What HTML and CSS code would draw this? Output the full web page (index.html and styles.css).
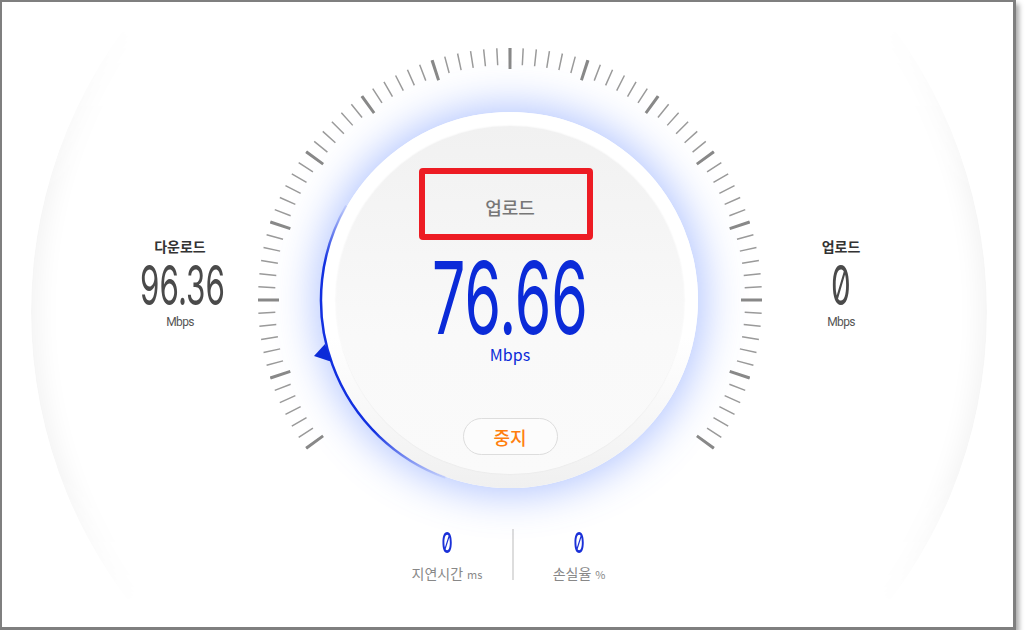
FILE: index.html
```html
<!DOCTYPE html>
<html lang="ko">
<head>
    <meta charset="UTF-8" />
    <title>인터넷 속도 측정</title>
    <link rel="stylesheet" href="styles.css">
</head>
<body>
    <div class="window">
        <div class="backdrop"></div>

        <div class="gauge-row">
            <!-- finished download result -->
            <div class="side side-left">
                <div class="side-label">다운로드</div>
                <div class="side-value">96.36</div>
                <div class="side-unit">Mbps</div>
            </div>

            <!-- dial -->
            <div class="dial">
                <div class="face">
                    <div class="face-inner">
                        <div class="phase">업로드</div>
                        <div class="speed">76.66</div>
                        <div class="speed-unit">Mbps</div>
                        <button class="stop">중지</button>
                        <div class="mark"></div>
                    </div>
                </div>
                <svg class="scale" width="520" height="480" viewBox="0 0 520 480">
                    <defs>
                        <linearGradient id="arc-fade" gradientUnits="userSpaceOnUse" x1="0" y1="160" x2="0" y2="442">
                            <stop offset="0" stop-color="#1230e0" stop-opacity="0" />
                            <stop offset="0.22" stop-color="#1230e0" />
                            <stop offset="0.82" stop-color="#1230e0" />
                            <stop offset="1" stop-color="#1230e0" stop-opacity="0" />
                        </linearGradient>
                    </defs>
                    <!-- 85 ticks, 3deg apart, from 216deg to -36deg -->
                    <path class="tick-minor" pathLength="254" d="M 65.53 406.54 A 243.5 243.5 0 1 1 454.47 406.54" />
                    <path class="tick-major" pathLength="254" d="M 67.13 405.34 A 241.5 241.5 0 1 1 452.87 405.34" />
                    <path class="arc" stroke="url(#arc-fade)" d="M 96.3 165.5 A 189 189 0 0 0 195.4 437.6" />
                    <polygon class="pointer" points="64,316 75,304 82,322" />
                </svg>
            </div>

            <!-- upload result (pending) -->
            <div class="side side-right">
                <div class="side-label">업로드</div>
                <div class="side-value">0</div>
                <div class="side-unit">Mbps</div>
            </div>
        </div>

        <div class="stats">
            <div class="stat">
                <div class="stat-value">0</div>
                <div class="stat-label">지연시간 <small>ms</small></div>
            </div>
            <div class="divider"></div>
            <div class="stat">
                <div class="stat-value">0</div>
                <div class="stat-label">손실율 <small>%</small></div>
            </div>
        </div>
    </div>
</body>
</html>
```

FILE: styles.css
```css
body {
    margin: 0;
    background: #fff;
    font-family: "Noto Sans CJK KR", "Noto Sans", sans-serif;
}

.window {
    position: relative;
    width: 1016px;
    height: 630px;
    box-sizing: border-box;
    border: solid #7f7f7f;
    border-width: 2px 3px 3px 2px;
    box-shadow: 3px 4px 5px rgba(0, 0, 0, 0.35);
    background: #fff;
    overflow: hidden;
}

/* big pale disc behind the gauge, only its sides show */
.backdrop {
    position: absolute;
    left: 29px;
    top: -168px;
    width: 956px;
    height: 956px;
    border-radius: 50%;
    box-shadow: inset 18px 0 26px -12px rgba(0, 0, 0, 0.055),
                inset -18px 0 26px -12px rgba(0, 0, 0, 0.055);
    -webkit-mask-image: linear-gradient(transparent 185px, #000 360px, #000 640px, transparent 775px);
    mask-image: linear-gradient(transparent 185px, #000 360px, #000 640px, transparent 775px);
}

.gauge-row {
    position: relative;
    display: grid;
    grid-template-columns: 248px 520px 1fr;
    height: 480px;
    margin-top: 38px;
}

.side {
    width: 140px;
    margin-top: 196px;
    align-self: start;
    text-align: center;
}

.side-left {
    justify-self: end;
}

.side-right {
    justify-self: start;
    margin-left: 1px;
}

.side-label {
    font-size: 14px;
    line-height: 20px;
    font-weight: 700;
    color: #333;
}

.side-value {
    margin-top: 1.5px;
    font-family: Inter, sans-serif;
    font-weight: 400;
    font-size: 55px;
    line-height: 55px;
    color: #4a4a4a;
    font-feature-settings: "zero" 1;
    transform: scaleX(0.57);
}

.side-unit {
    margin-top: 1px;
    font-family: Roboto, sans-serif;
    font-size: 12px;
    line-height: 16px;
    letter-spacing: -0.6px;
    color: #555;
}

.dial {
    position: relative;
    display: flex;
    justify-content: center;
    align-items: flex-start;
    padding-top: 72px;
    box-sizing: border-box;
}

.face {
    width: 376px;
    height: 376px;
    border-radius: 50%;
    background: linear-gradient(#fff 60%, #f0f0f0);
    box-shadow: 0 0 42px 6px rgba(70, 115, 255, 0.42);
    display: flex;
    align-items: center;
    justify-content: center;
}

.face-inner {
    position: relative;
    width: 348px;
    height: 348px;
    box-sizing: border-box;
    padding-top: 69px;
    border-radius: 50%;
    background: linear-gradient(#f1f1f1, #f9f9f9 60%, #fafafa);
    box-shadow: 0 0 2px rgba(0, 0, 0, 0.08);
    display: flex;
    flex-direction: column;
    align-items: center;
}

.phase {
    font-size: 18px;
    line-height: 24px;
    font-weight: 500;
    color: #777;
}

.speed {
    margin-top: 29px;
    font-family: Inter, sans-serif;
    font-size: 100px;
    line-height: 100px;
    color: #0b2bd8;
    font-feature-settings: "zero" 1;
    transform: scaleX(0.59);
}

.speed-unit {
    margin-top: -4px;
    font-size: 16px;
    line-height: 20px;
    color: #0b2bd8;
}

.stop {
    margin-top: 54px;
    width: 95px;
    height: 37px;
    padding: 0;
    border: 1px solid #ddd;
    border-radius: 19px;
    background: #fcfcfc;
    color: #ff7f0e;
    font-family: "Noto Sans CJK KR", sans-serif;
    font-size: 18px;
    font-weight: 500;
}

/* red annotation frame over the phase label */
.mark {
    position: absolute;
    left: 83px;
    top: 42px;
    width: 174px;
    height: 72px;
    box-sizing: border-box;
    border: 6px solid #ed1c24;
    border-radius: 4px;
}

.scale {
    position: absolute;
    left: 0;
    top: 0;
    overflow: visible;
    pointer-events: none;
}

.tick-minor {
    fill: none;
    stroke: #9a9a9a;
    stroke-width: 17;
    stroke-dasharray: 0.35 2.65;
    stroke-dashoffset: -0.825;
}

.tick-major {
    fill: none;
    stroke: #888;
    stroke-width: 21;
    stroke-dasharray: 0.72 17.28;
    stroke-dashoffset: -0.64;
}

.arc {
    fill: none;
    stroke-width: 2.5;
}

.pointer {
    fill: #0b2bd8;
}

.stats {
    display: flex;
    margin: 8px 0 0 380px;
}

.stat {
    width: 130px;
    text-align: center;
}

.stat-value {
    font-family: Inter, sans-serif;
    font-size: 29px;
    line-height: 29px;
    font-weight: 500;
    color: #1a30d8;
    font-feature-settings: "zero" 1;
    transform: scaleX(0.6);
}

.stat-label {
    margin-top: 6px;
    font-size: 14px;
    line-height: 20px;
    color: #888;
}

.stat-label small {
    font-size: 11px;
}

.divider {
    width: 2px;
    height: 51px;
    margin-top: 1px;
    background: #ddd;
}
```
